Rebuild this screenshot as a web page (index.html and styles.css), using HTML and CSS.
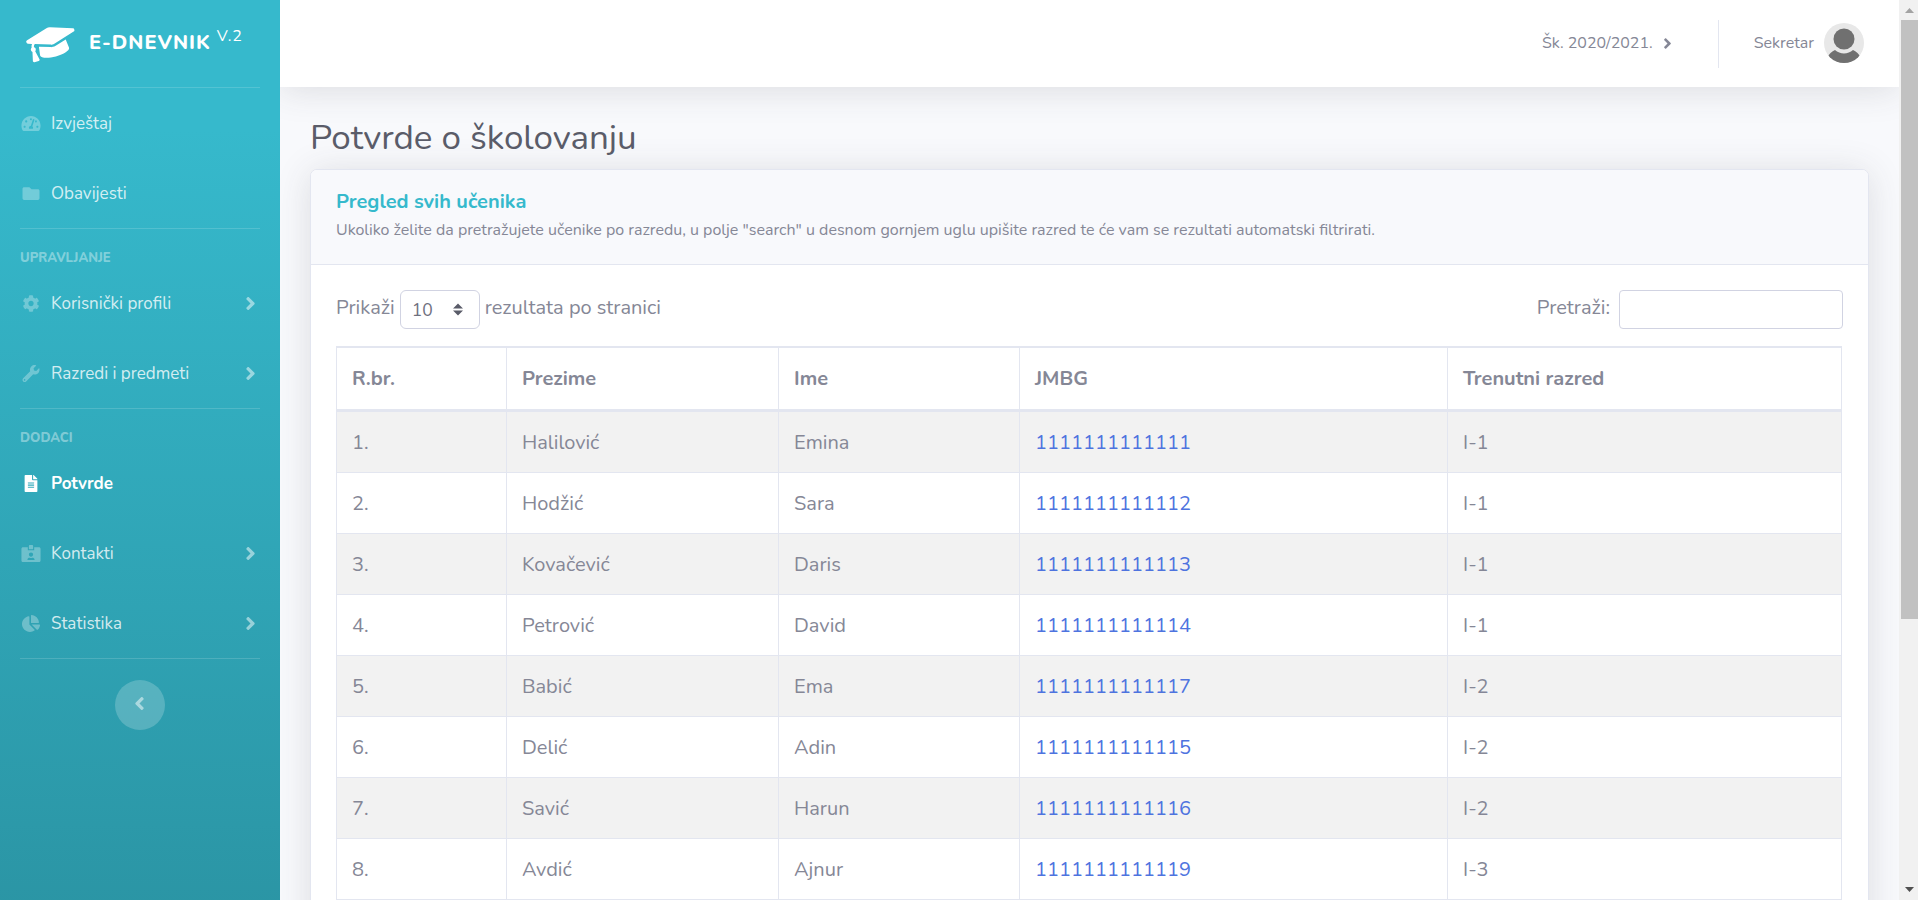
FILE: index.html
```
<!DOCTYPE html>
<html lang="bs">
<head>
<meta charset="utf-8">
<title>E-Dnevnik</title>
<link rel="stylesheet" href="styles.css">
</head>
<body>
<svg width="0" height="0" class="sprite" aria-hidden="true">
  <symbol id="angle-right" viewBox="0 0 256 512"><path d="M224.3 273l-136 136c-9.4 9.4-24.6 9.4-33.9 0l-22.6-22.6c-9.4-9.4-9.4-24.6 0-33.9l96.4-96.4-96.4-96.4c-9.4-9.4-9.4-24.6 0-33.9L54.3 103c9.4-9.4 24.6-9.4 33.9 0l136 136c9.5 9.4 9.5 24.6.1 34z"/></symbol>
</svg>
<div class="wrapper">
  <nav class="sidebar">
    <a class="brand">
      <svg class="brand-icon" viewBox="0 0 640 512"><path d="M622.34 153.2L343.4 67.5c-15.2-4.67-31.6-4.67-46.79 0L17.66 153.2c-23.54 7.23-23.54 38.36 0 45.59l48.63 14.94c-10.67 13.19-17.23 29.28-17.88 46.9C38.78 266.15 32 276.11 32 288c0 10.78 5.68 19.85 13.86 25.65L20.33 428.53C18.11 438.52 25.71 448 35.94 448h56.11c10.24 0 17.84-9.48 15.62-19.47L82.14 313.65C90.32 307.85 96 298.78 96 288c0-11.57-6.47-21.25-15.66-26.87.76-15.02 8.44-28.3 20.69-36.72L296.6 284.5c9.06 2.78 26.44 6.25 46.79 0l278.95-85.7c23.55-7.24 23.55-38.36 0-45.6zM352.79 315.09c-28.53 8.76-52.84 3.92-65.59 0l-145.02-44.55L128 384c0 35.35 85.96 64 192 64s192-28.65 192-64l-14.18-113.47-145.03 44.56z"/></svg>
      <span class="brand-text">E-DNEVNIK</span>
      <span class="brand-version">V.2</span>
    </a>
    <hr class="divider">
    <a class="nav-item">
      <svg class="nav-icon" viewBox="0 0 576 512"><path d="M288 32C128.94 32 0 160.94 0 320c0 52.8 14.25 102.26 39.06 144.8 5.61 9.62 16.3 15.2 27.44 15.2h443c11.14 0 21.83-5.58 27.44-15.2C561.75 422.26 576 372.8 576 320c0-159.06-128.94-288-288-288zm0 64c14.71 0 26.58 10.13 30.32 23.65-1.11 2.26-2.64 4.23-3.45 6.67l-9.22 27.67c-5.13 3.49-10.97 6.01-17.64 6.01-17.67 0-32-14.33-32-32S270.33 96 288 96zM96 384c-17.67 0-32-14.33-32-32s14.33-32 32-32 32 14.33 32 32-14.33 32-32 32zm48-160c-17.67 0-32-14.33-32-32s14.33-32 32-32 32 14.33 32 32-14.33 32-32 32zm246.77-72.41l-61.33 184C343.13 347.33 352 364.54 352 384c0 11.72-3.38 22.55-8.88 32H232.88c-5.5-9.45-8.88-20.28-8.88-32 0-33.94 26.5-61.43 59.9-63.59l61.34-184.01c4.17-12.56 17.73-19.45 30.36-15.17 12.57 4.19 19.35 17.79 15.17 30.36zm14.66 57.2l15.52-46.55c3.47-1.29 7.13-2.23 11.05-2.23 17.67 0 32 14.33 32 32s-14.33 32-32 32c-11.38-.01-20.89-6.28-26.57-15.22zM480 384c-17.67 0-32-14.33-32-32s14.33-32 32-32 32 14.33 32 32-14.33 32-32 32z"/></svg>
      <span>Izvještaj</span>
    </a>
    <a class="nav-item">
      <svg class="nav-icon" viewBox="0 0 512 512"><path d="M464 128H272l-64-64H48C21.49 64 0 85.49 0 112v288c0 26.51 21.49 48 48 48h416c26.51 0 48-21.49 48-48V176c0-26.51-21.49-48-48-48z"/></svg>
      <span>Obavijesti</span>
    </a>
    <hr class="divider">
    <div class="nav-heading">Upravljanje</div>
    <a class="nav-item">
      <svg class="nav-icon" viewBox="0 0 512 512"><path d="M487.4 315.7l-42.6-24.6c4.3-23.2 4.3-47 0-70.2l42.6-24.6c4.9-2.8 7.1-8.6 5.5-14-11.1-35.6-30-67.8-54.7-94.6-3.8-4.1-10-5.1-14.8-2.3L380.8 110c-17.9-15.4-38.5-27.3-60.8-35.1V25.8c0-5.6-3.9-10.5-9.4-11.7-36.7-8.2-74.3-7.8-109.2 0-5.5 1.2-9.4 6.1-9.4 11.7V75c-22.2 7.9-42.8 19.8-60.8 35.1L88.7 85.5c-4.9-2.8-11-1.9-14.8 2.3-24.7 26.7-43.6 58.9-54.7 94.6-1.7 5.4.6 11.2 5.5 14L67.3 221c-4.3 23.2-4.3 47 0 70.2l-42.6 24.6c-4.9 2.8-7.1 8.6-5.5 14 11.1 35.6 30 67.8 54.7 94.6 3.8 4.1 10 5.1 14.8 2.3l42.6-24.6c17.9 15.4 38.5 27.3 60.8 35.1v49.2c0 5.6 3.9 10.5 9.4 11.7 36.7 8.2 74.3 7.8 109.2 0 5.5-1.2 9.4-6.1 9.4-11.7v-49.2c22.2-7.9 42.8-19.8 60.8-35.1l42.6 24.6c4.9 2.8 11 1.9 14.8-2.3 24.7-26.7 43.6-58.9 54.7-94.6 1.5-5.5-.7-11.3-5.6-14.1zM256 336c-44.1 0-80-35.9-80-80s35.9-80 80-80 80 35.9 80 80-35.9 80-80 80z"/></svg>
      <span>Korisnički profili</span>
      <svg class="nav-arrow"><use href="#angle-right"/></svg>
    </a>
    <a class="nav-item">
      <svg class="nav-icon" viewBox="0 0 512 512"><path d="M507.73 109.1c-2.24-9.03-13.54-12.09-20.12-5.51l-74.36 74.36-67.88-11.31-11.31-67.88 74.36-74.36c6.62-6.62 3.43-17.9-5.66-20.16-47.38-11.74-99.55.91-136.58 37.93-39.64 39.64-50.55 97.1-34.05 147.2L18.74 402.76c-24.99 24.99-24.99 65.51 0 90.5 24.99 24.99 65.51 24.99 90.5 0l213.21-213.21c50.12 16.71 107.47 5.68 147.37-34.22 37.07-37.07 49.7-89.32 37.91-136.73zM64 472c-13.25 0-24-10.75-24-24 0-13.26 10.75-24 24-24s24 10.74 24 24c0 13.25-10.75 24-24 24z"/></svg>
      <span>Razredi i predmeti</span>
      <svg class="nav-arrow"><use href="#angle-right"/></svg>
    </a>
    <hr class="divider">
    <div class="nav-heading">Dodaci</div>
    <a class="nav-item active">
      <svg class="nav-icon" viewBox="0 0 384 512"><path d="M224 136V0H24C10.7 0 0 10.7 0 24v464c0 13.3 10.7 24 24 24h336c13.3 0 24-10.7 24-24V160H248c-13.2 0-24-10.8-24-24zm64 236c0 6.6-5.4 12-12 12H108c-6.6 0-12-5.4-12-12v-8c0-6.6 5.4-12 12-12h168c6.6 0 12 5.4 12 12v8zm0-64c0 6.6-5.4 12-12 12H108c-6.6 0-12-5.4-12-12v-8c0-6.6 5.4-12 12-12h168c6.6 0 12 5.4 12 12v8zm0-72v8c0 6.6-5.4 12-12 12H108c-6.6 0-12-5.4-12-12v-8c0-6.6 5.4-12 12-12h168c6.6 0 12 5.4 12 12zm96-114.1v6.1H256V0h6.1c6.4 0 12.5 2.5 17 7l97.9 98c4.5 4.5 7 10.6 7 16.9z"/></svg>
      <span>Potvrde</span>
    </a>
    <a class="nav-item">
      <svg class="nav-icon" viewBox="0 0 576 512"><path d="M528 64H384v96H192V64H48C21.5 64 0 85.5 0 112v352c0 26.5 21.5 48 48 48h480c26.5 0 48-21.5 48-48V112c0-26.5-21.5-48-48-48zM288 224c35.3 0 64 28.7 64 64s-28.7 64-64 64-64-28.7-64-64 28.7-64 64-64zm93.3 224H194.7c-10.4 0-18.8-10-15.6-19.8 8.3-25.6 32.4-44.2 60.9-44.2h8.2c12.3 5.1 25.7 8 39.8 8s27.6-2.9 39.8-8h8.2c28.4 0 52.5 18.5 60.9 44.2 3.2 9.9-5.2 19.8-15.6 19.8zM352 32c0-17.7-14.3-32-32-32h-64c-17.7 0-32 14.3-32 32v96h128V32z"/></svg>
      <span>Kontakti</span>
      <svg class="nav-arrow"><use href="#angle-right"/></svg>
    </a>
    <a class="nav-item">
      <svg class="nav-icon" viewBox="0 0 544 512"><path d="M527.79 288H290.5l158.03 158.03c6.04 6.04 15.98 6.53 22.19.68 38.7-36.46 65.32-85.61 73.13-140.86 1.34-9.46-6.51-17.85-16.06-17.85zm-15.83-64.8C503.72 103.74 408.26 8.28 288.8.04 279.68-.59 272 7.1 272 16.24V240h223.77c9.14 0 16.82-7.68 16.19-16.8zM224 288V50.71c0-9.55-8.39-17.4-17.84-16.06C86.99 51.49-4.1 155.6.14 280.37 4.5 408.51 114.83 513.59 243.03 511.98c50.4-.63 96.97-16.87 135.26-44.03 7.9-5.6 8.42-17.23 1.57-24.08L224 288z"/></svg>
      <span>Statistika</span>
      <svg class="nav-arrow"><use href="#angle-right"/></svg>
    </a>
    <hr class="divider">
    <button class="toggle"><svg class="toggle-arrow"><use href="#angle-right"/></svg></button>
  </nav>

  <div class="page">
    <header class="topbar">
      <a class="year"><span>Šk. 2020/2021.</span><svg class="year-arrow"><use href="#angle-right"/></svg></a>
      <div class="topbar-divider"></div>
      <a class="user">
        <span>Sekretar</span>
        <svg class="avatar" viewBox="0 0 40 40">
          <defs><clipPath id="round"><circle cx="20" cy="20" r="20"/></clipPath></defs>
          <g clip-path="url(#round)">
            <rect width="40" height="40" fill="#e8e8e8"/>
            <path d="M2 36c3-5 6-8 9-9 5 4.500 13 4.500 18 0 3 1 6 4 9 9v6H2z" fill="#707070"/>
            <circle cx="20" cy="16" r="10.500" fill="#707070"/>
          </g>
        </svg>
      </a>
    </header>
    <main class="content">
      <h1 class="title">Potvrde o školovanju</h1>
      <section class="card">
        <div class="card-header">
          <h2 class="card-title">Pregled svih učenika</h2>
          <p class="card-note">Ukoliko želite da pretražujete učenike po razredu, u polje "search" u desnom gornjem uglu upišite razred te će vam se rezultati automatski filtrirati.</p>
        </div>
        <div class="card-body">
          <div class="controls">
            <div class="length">
              <span>Prikaži</span>
              <span class="select"><span>10</span><svg class="sort" viewBox="0 0 10 12"><path d="M0 5L5 0l5 5zM0 7h10l-5 5z"/></svg></span>
              <span>rezultata po stranici</span>
            </div>
            <label class="search"><span>Pretraži:</span><input class="search-input" type="text"></label>
          </div>
          <table class="table">
            <colgroup><col class="c1"><col class="c2"><col class="c3"><col class="c4"><col class="c5"></colgroup>
            <thead><tr><th>R.br.</th><th>Prezime</th><th>Ime</th><th>JMBG</th><th>Trenutni razred</th></tr></thead>
            <tbody>
              <tr><td>1.</td><td>Halilović</td><td>Emina</td><td><a>1111111111111</a></td><td>I-1</td></tr>
              <tr><td>2.</td><td>Hodžić</td><td>Sara</td><td><a>1111111111112</a></td><td>I-1</td></tr>
              <tr><td>3.</td><td>Kovačević</td><td>Daris</td><td><a>1111111111113</a></td><td>I-1</td></tr>
              <tr><td>4.</td><td>Petrović</td><td>David</td><td><a>1111111111114</a></td><td>I-1</td></tr>
              <tr><td>5.</td><td>Babić</td><td>Ema</td><td><a>1111111111117</a></td><td>I-2</td></tr>
              <tr><td>6.</td><td>Delić</td><td>Adin</td><td><a>1111111111115</a></td><td>I-2</td></tr>
              <tr><td>7.</td><td>Savić</td><td>Harun</td><td><a>1111111111116</a></td><td>I-2</td></tr>
              <tr><td>8.</td><td>Avdić</td><td>Ajnur</td><td><a>1111111111119</a></td><td>I-3</td></tr>
            </tbody>
          </table>
        </div>
      </section>
    </main>
  </div>

  <div class="scrollbar">
    <svg class="scroll-arrow" viewBox="0 0 9 5"><path d="M0 5L4.500 0 9 5z" fill="#a3a3a3"/></svg>
    <div class="scroll-thumb"></div>
    <svg class="scroll-arrow scroll-down" viewBox="0 0 9 5"><path d="M0 0h9L4.500 5z" fill="#505050"/></svg>
  </div>
</div>
</body>
</html>
```
FILE: styles.css
```
* { box-sizing: border-box; }
body {
  margin: 0;
  height: 900px;
  overflow: hidden;
  background: #f8f9fc;
  color: #858796;
  font-family: Nunito, Lato, sans-serif;
  font-size: 20px;
}
.sprite { position: absolute; }
.wrapper { display: flex; height: 900px; overflow: hidden; }

/* Sidebar */
.sidebar {
  position: relative;
  z-index: 2;
  flex: 0 0 280px;
  color: #fff;
  background: linear-gradient(180deg, #36b9cc 130px, #258391 1301px);
}
.brand { display: flex; height: 87px; padding-left: 27px; }
.brand-icon {
  width: 50px;
  height: 40px;
  margin-top: 22px;
  fill: #fff;
  transform: rotate(-15deg);
}
.brand-text {
  margin-left: 12px;
  font-weight: 800;
  line-height: 85px;
  letter-spacing: 1px;
}
.brand-version { margin-left: 6px; font-size: 16px; line-height: 72px; letter-spacing: .8px; }
.divider {
  height: 1px;
  margin: 0 20px;
  border: 0;
  background: rgba(255, 255, 255, .15);
}
.nav-item {
  display: flex;
  align-items: center;
  gap: 9px;
  height: 70px;
  padding: 0 24px 0 20px;
  font-size: 17px;
  color: rgba(255, 255, 255, .8);
}
.nav-icon { width: 22px; height: 17px; fill: rgba(255, 255, 255, .3); }
.nav-arrow { width: 11px; height: 21px; margin-left: auto; fill: rgba(255, 255, 255, .5); }
.nav-item.active { color: #fff; font-weight: 700; }
.active .nav-icon { fill: #fff; }
.nav-heading {
  height: 39px;
  padding: 21px 20px 0;
  font-size: 13px;
  font-weight: 800;
  line-height: 17px;
  text-transform: uppercase;
  color: rgba(255, 255, 255, .4);
}
.toggle {
  display: flex;
  align-items: center;
  justify-content: center;
  width: 50px;
  height: 50px;
  margin: 21px auto 0;
  padding: 0 2px 3px 0;
  border: 0;
  border-radius: 50%;
  background: rgba(255, 255, 255, .2);
}
.toggle-arrow { width: 11px; height: 21px; fill: rgba(255, 255, 255, .5); transform: scaleX(-1); }

/* Topbar */
.page { flex: 1; min-width: 0; }
.topbar {
  position: relative;
  z-index: 1;
  display: flex;
  justify-content: flex-end;
  align-items: center;
  height: 87px;
  padding-right: 35px;
  background: #fff;
  font-size: 16px;
  box-shadow: 0 3px 35px rgba(58, 59, 69, .15);
}
.year, .user { display: flex; align-items: center; line-height: 20px; padding-bottom: 1px; }
.year-arrow { width: 9px; height: 17px; margin-left: 10px; fill: #858796; }
.topbar-divider { width: 1px; height: 48px; margin: 0 35px 0 46px; background: #e3e6f0; }
.avatar { width: 40px; height: 40px; margin-left: 10px; }

/* Content */
.content { padding: 30px 30px 0; }
.title {
  margin: 0 0 10px;
  font-size: 35px;
  font-weight: 400;
  line-height: 42px;
  color: #5a5c69;
}
.card {
  height: 1000px;
  border: 1px solid #e3e6f0;
  border-radius: 7px;
  background: #fff;
  box-shadow: 0 3px 35px rgba(58, 59, 69, .15);
}
.card-header {
  height: 95px;
  padding: 20px 25px 0;
  border-bottom: 1px solid #e3e6f0;
  border-radius: 6px 6px 0 0;
  background: #f8f9fc;
}
.card-title {
  margin: 0 0 4px;
  font-size: 20px;
  font-weight: 700;
  line-height: 24px;
  color: #36b9cc;
}
.card-note { margin: 0; font-size: 16px; line-height: 24px; }
.card-body { padding: 25px 25px 0; }

.controls { display: flex; justify-content: space-between; height: 39px; line-height: 36px; }
.length, .search { display: flex; align-items: flex-start; }
.select {
  display: flex;
  align-items: center;
  justify-content: space-between;
  width: 80px;
  height: 39px;
  margin: 0 5px;
  padding: 0 16px 0 11px;
  border: 1px solid #d1d3e2;
  border-radius: 6px;
  font-size: 17.5px;
  color: #6e707e;
}
.sort { width: 10px; height: 13px; fill: #5a5c69; }
.search-input {
  width: 224px;
  height: 39px;
  margin: 0 0 0 9px;
  border: 1px solid #d1d3e2;
  border-radius: 4px;
  background: #fff;
}

.table {
  width: 1506px;
  margin-top: 17px;
  table-layout: fixed;
  border-collapse: separate;
  border-spacing: 0;
  border-left: 1px solid #e3e6f0;
}
.c1 { width: 170px; }
.c2 { width: 272px; }
.c3 { width: 241px; }
.c4 { width: 428px; }
.c5 { width: 394px; }
.table th, .table td {
  height: 61px;
  padding: 1px 15px 0;
  border: 0 solid #e3e6f0;
  border-width: 0 1px 1px 0;
  text-align: left;
}
.table th { height: 66px; padding-top: 0; border-width: 2px 1px 3px 0; }
.table tbody tr:nth-child(odd) { background: #f2f2f2; }
.table a { color: #4e73df; }

/* Window scrollbar */
.scrollbar {
  position: relative;
  z-index: 3;
  display: flex;
  flex-direction: column;
  flex: 0 0 19px;
  align-items: flex-end;
  padding: 8px 0;
  background: #f1f1f1;
}
.scroll-arrow { width: 9px; height: 5px; margin-right: 4px; }
.scroll-thumb { width: 17px; height: 599px; margin-top: 7px; background: #c1c1c1; }
.scroll-down { margin-top: auto; }
```
